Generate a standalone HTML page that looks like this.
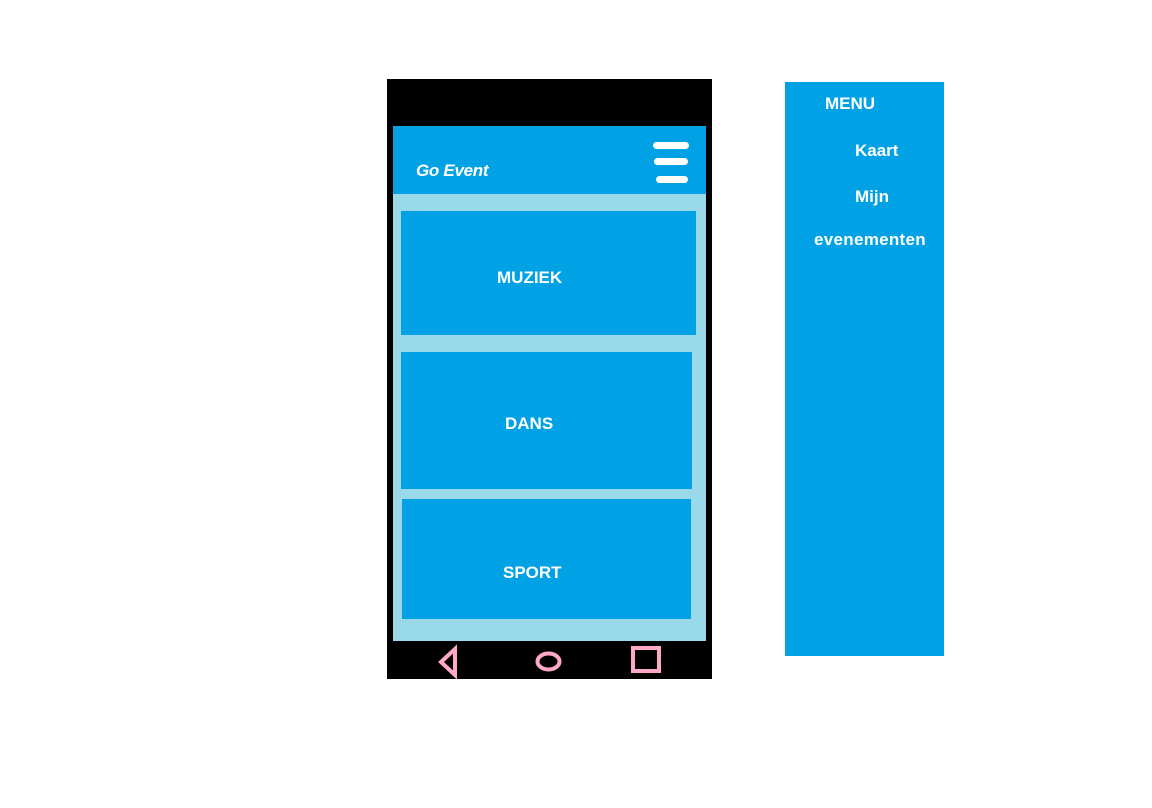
<!DOCTYPE html>
<html><head><meta charset="utf-8"><style>
body{margin:0;width:1152px;height:808px;background:#fff;position:relative;overflow:hidden;font-family:"Liberation Sans",sans-serif;}
div{position:absolute;box-sizing:border-box}
.t{color:#fff;font-weight:bold;font-size:17px;line-height:1;white-space:nowrap}
.b{background:#00a2e5}
.hl{background:#fff;border-radius:4px;height:7px}
</style></head><body>
<div style="left:387px;top:79px;width:325px;height:600px;background:#000"></div>
<div style="left:393px;top:126px;width:313px;height:68px" class="b"></div>
<div style="left:393px;top:194px;width:313px;height:447px;background:#99d9ea"></div>
<div class="t" style="left:416px;top:162px;font-style:italic;font-size:17px;letter-spacing:-0.3px">Go Event</div>
<div class="hl" style="left:653px;top:142px;width:36px"></div>
<div class="hl" style="left:654px;top:158px;width:34px"></div>
<div class="hl" style="left:656px;top:176px;width:32px"></div>
<div class="b" style="left:401px;top:211px;width:295px;height:124px"></div>
<div class="b" style="left:401px;top:352px;width:291px;height:137px"></div>
<div class="b" style="left:402px;top:499px;width:289px;height:120px"></div>
<div class="t" style="left:497px;top:269px">MUZIEK</div>
<div class="t" style="left:505px;top:415px">DANS</div>
<div class="t" style="left:503px;top:564px">SPORT</div>
<svg style="position:absolute;left:0;top:0" width="1152" height="808">
<path d="M455,649 L455,675 L441,662 Z" fill="none" stroke="#ffa8c8" stroke-width="4"/>
<ellipse cx="548.5" cy="661.5" rx="11" ry="8" fill="none" stroke="#ffa8c8" stroke-width="4"/>
<rect x="633" y="648" width="26" height="23" fill="none" stroke="#ffa8c8" stroke-width="4"/>
</svg>
<div class="b" style="left:785px;top:82px;width:159px;height:574px"></div>
<div class="t" style="left:825px;top:95px">MENU</div>
<div class="t" style="left:855px;top:142px">Kaart</div>
<div class="t" style="left:855px;top:188px">Mijn</div>
<div class="t" style="left:814px;top:231px;letter-spacing:0.3px">evenementen</div>
</body></html>
